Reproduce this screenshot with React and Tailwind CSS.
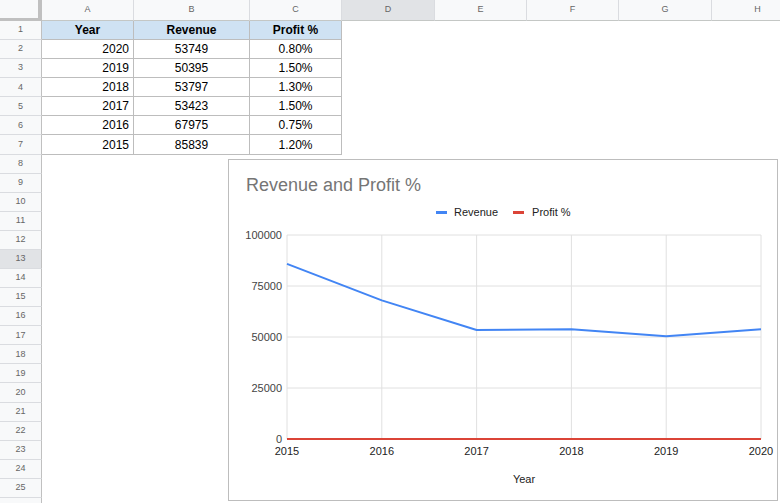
import React from 'react';

const columns = [
  { label: 'A', w: 'w-[92px]' },
  { label: 'B', w: 'w-[116px]' },
  { label: 'C', w: 'w-[92px]' },
  { label: 'D', w: 'w-[93px]', active: true },
  { label: 'E', w: 'w-[92px]' },
  { label: 'F', w: 'w-[92px]' },
  { label: 'G', w: 'w-[93px]' },
  { label: 'H', w: 'w-[92px]' },
];

const sheet = [
  ['2020', '53749', '0.80%'],
  ['2019', '50395', '1.50%'],
  ['2018', '53797', '1.30%'],
  ['2017', '53423', '1.50%'],
  ['2016', '67975', '0.75%'],
  ['2015', '85839', '1.20%'],
];

const years = ['2015', '2016', '2017', '2018', '2019', '2020'];
const revenue = [85839, 67975, 53423, 53797, 50395, 53749];
const profit = [1.2, 0.75, 1.5, 1.3, 1.5, 0.8];

// plot area, in chart content coordinates
const X0 = 58;
const X1 = 532;
const Y0 = 75;
const Y1 = 279;
const px = (i) => X0 + (i * (X1 - X0)) / 5;
const py = (v) => Y1 - ((Y1 - Y0) * v) / 100000;

const HeaderRow = () => (
  <div className="flex h-[21px]">
    <div className="w-[42px] shrink-0 bg-[#f8f9fa] border-r-4 border-b-[3px] border-[#c0c0c0]" />
    {columns.map((c) => (
      <div
        key={c.label}
        className={`${c.w} shrink-0 flex items-center justify-center border-r border-r-[#dadce0] border-b border-b-[#c4c7c5] text-[9px] text-[#666] ${
          c.active ? 'bg-[#e1e3e6]' : 'bg-[#f8f9fa]'
        }`}
      >
        {c.label}
      </div>
    ))}
  </div>
);

const Row = ({ n }) => {
  const head = n === 1;
  const values = n >= 2 && n <= 7 ? sheet[n - 2] : null;
  const inTable = n <= 7;

  return (
    <div className="flex h-[19.08px]">
      <div
        className={`w-[42px] shrink-0 flex items-center justify-center border-r border-r-[#c0c0c0] border-b border-b-[#dadce0] text-[9px] text-[#666] ${
          n === 13 ? 'bg-[#e1e3e6]' : 'bg-[#f8f9fa]'
        }`}
      >
        {n}
      </div>
      {inTable ? (
        <>
          <div
            className={`w-[92px] shrink-0 flex items-center border-r border-b border-[#bdbdbd] text-[12px] text-black ${
              head ? 'bg-[#cfe2f3] justify-center font-bold' : 'justify-end pr-[4px]'
            }`}
          >
            {head ? 'Year' : values[0]}
          </div>
          <div
            className={`w-[116px] shrink-0 flex items-center justify-center border-r border-b border-[#bdbdbd] text-[12px] text-black ${
              head ? 'bg-[#cfe2f3] font-bold' : ''
            }`}
          >
            {head ? 'Revenue' : values[1]}
          </div>
          <div
            className={`w-[92px] shrink-0 flex items-center justify-center border-r border-b border-[#bdbdbd] text-[12px] text-black ${
              head ? 'bg-[#cfe2f3] font-bold' : ''
            }`}
          >
            {head ? 'Profit %' : values[2]}
          </div>
        </>
      ) : null}
      <div className="flex-1" />
    </div>
  );
};

const Chart = () => {
  const revPoints = revenue.map((v, i) => `${px(i)},${py(v)}`).join(' ');
  const profPoints = profit.map((v, i) => `${px(i)},${py(v / 100)}`).join(' ');

  return (
    <div className="absolute left-[228px] top-[159px] w-[550px] h-[342px] bg-white border border-[#bdbdbd]">
      <div className="pt-[15px] pl-[17px] text-[18px] leading-[21px] text-[#757575]">
        Revenue and Profit %
      </div>
      <div className="mt-[10px] h-[13px] pl-[207px] flex items-center text-[11px] leading-[13px] text-[#222]">
        <span className="w-[11px] h-[3px] bg-[#4285f4]" />
        <span className="ml-[7px]">Revenue</span>
        <span className="ml-[15px] w-[11px] h-[3px] bg-[#db4437]" />
        <span className="ml-[8px]">Profit %</span>
      </div>
      <svg width="548" height="281" viewBox="0 59 548 281" className="block">
        {[0, 25000, 50000, 75000, 100000].map((v) => (
          <g key={v}>
            <line x1={X0} x2={X1} y1={py(v)} y2={py(v)} stroke="#e0e0e0" strokeWidth="1" />
            <text x="53" y={py(v) + 4} textAnchor="end" fontSize="11" fill="#444">
              {v}
            </text>
          </g>
        ))}
        {years.map((y, i) => (
          <g key={y}>
            <line x1={px(i)} x2={px(i)} y1={Y0} y2={Y1} stroke="#e0e0e0" strokeWidth="1" />
            <text x={px(i)} y="295" textAnchor="middle" fontSize="11" fill="#222">
              {y}
            </text>
          </g>
        ))}
        <polyline points={revPoints} fill="none" stroke="#4285f4" strokeWidth="2" strokeLinejoin="round" />
        <polyline points={profPoints} fill="none" stroke="#db4437" strokeWidth="2" strokeLinejoin="round" />
        <text x={(X0 + X1) / 2} y="323" textAnchor="middle" fontSize="11" fill="#222">
          Year
        </text>
      </svg>
    </div>
  );
}

export default function App() {
  return (
    <div className="relative w-[780px] h-[503px] overflow-hidden bg-white font-['Liberation_Sans',Arial,sans-serif]">
      <HeaderRow />
      {Array.from({ length: 25 }, (_, i) => i + 1).map((n) => (
        <Row key={n} n={n} />
      ))}
      <div className="flex h-[19px]">
        <div className="w-[42px] shrink-0 bg-[#f8f9fa] border-r border-r-[#c0c0c0]" />
      </div>
      <Chart />
    </div>
  );
}
